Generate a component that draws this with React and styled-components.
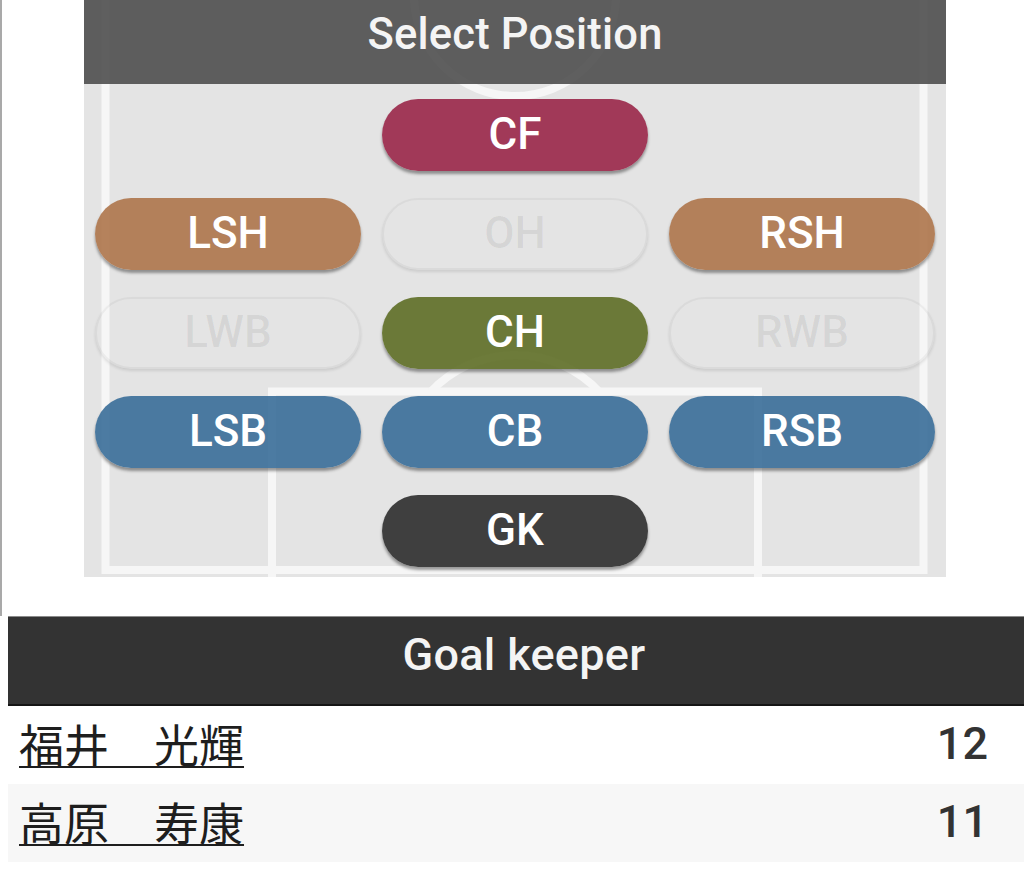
import React from "react";
import styled, { createGlobalStyle } from "styled-components";

const Global = createGlobalStyle`
  html, body { margin: 0; padding: 0; background: #ffffff; }
  body { font-family: Roboto, "Noto Sans", sans-serif; width: 1024px; }
`;

const Page = styled.div`
  width: 1024px;
  display: flex;
  flex-direction: column;
`;

const TopSection = styled.section`
  height: 616px;
  border-left: 2px solid #a9a9a9;
  padding-left: 82px;
  box-sizing: border-box;
`;

const Field = styled.div`
  position: relative;
  width: 862px;
  height: 577px;
  background: #e4e4e4;
  overflow: hidden;
  display: flex;
  flex-direction: column;
`;

const Pitch = styled.svg`
  position: absolute;
  inset: 0;
  width: 100%;
  height: 100%;
`;

const FieldHeader = styled.h2`
  position: relative;
  margin: 0;
  height: 84px;
  box-sizing: border-box;
  padding-bottom: 15px;
  display: flex;
  align-items: center;
  justify-content: center;
  background: rgba(74, 74, 74, 0.88);
  color: #f4f4f4;
  font-family: Roboto, sans-serif;
  font-weight: 500;
  font-size: 43.5px;
  letter-spacing: 0.2px;
`;

const Grid = styled.div`
  position: relative;
  display: grid;
  grid-template-columns: repeat(3, 1fr);
  grid-auto-rows: 72px;
  column-gap: 21px;
  row-gap: 27px;
  padding: 15px 11px 0 11px;
`;

const PosButton = styled.button`
  grid-column: ${(p) => p.$col};
  border-radius: 36px;
  border: ${(p) => (p.$off ? "2px solid rgba(0,0,0,0.045)" : "none")};
  background: ${(p) => p.$bg};
  color: ${(p) => (p.$off ? "rgba(0,0,0,0.065)" : "#ffffff")};
  box-shadow: ${(p) =>
    p.$off
      ? "0 2px 3px rgba(0,0,0,0.10)"
      : "0 3px 3px rgba(0,0,0,0.38)"};
  font-family: Roboto, sans-serif;
  font-weight: 500;
  font-size: 44px;
  line-height: 1;
  padding: 0 0 2px 0;
  display: flex;
  align-items: center;
  justify-content: center;
  cursor: pointer;
`;

const ListHeader = styled.h2`
  margin: 0 0 0 8px;
  height: 90px;
  box-sizing: border-box;
  padding: 0 0 12px 16px;
  border-top: 1px solid #8a8a8a;
  border-bottom: 2px solid #151515;
  background: #333333;
  color: #f4f4f4;
  display: flex;
  align-items: center;
  justify-content: center;
  font-family: Roboto, sans-serif;
  font-weight: 500;
  font-size: 45px;
  letter-spacing: 0.3px;
`;

const PlayerRow = styled.div`
  margin-left: 8px;
  height: 78px;
  display: flex;
  align-items: center;
  justify-content: space-between;
  padding: 0 36px 4px 11px;
  box-sizing: border-box;
  background: ${(p) => (p.$alt ? "#f7f7f7" : "#ffffff")};
`;

const PlayerName = styled.a`
  font-family: "Noto Sans CJK JP", "Noto Sans", sans-serif;
  font-weight: 400;
  font-size: 45px;
  line-height: 1;
  color: #1e1e1e;
  text-decoration: underline;
  text-decoration-thickness: 2px;
  text-underline-offset: 3px;
`;

const Number = styled.span`
  font-family: Roboto, sans-serif;
  font-weight: 500;
  font-size: 45px;
  line-height: 1;
  color: #333333;
`;

const positions = [
  { label: "CF", col: 2, bg: "rgba(156,44,77,0.93)" },
  { label: "LSH", col: 1, bg: "rgba(175,120,80,0.93)" },
  { label: "OH", col: 2, off: true },
  { label: "RSH", col: 3, bg: "rgba(175,120,80,0.93)" },
  { label: "LWB", col: 1, off: true },
  { label: "CH", col: 2, bg: "rgba(98,113,43,0.93)" },
  { label: "RWB", col: 3, off: true },
  { label: "LSB", col: 1, bg: "rgba(62,113,155,0.93)" },
  { label: "CB", col: 2, bg: "rgba(62,113,155,0.93)" },
  { label: "RSB", col: 3, bg: "rgba(62,113,155,0.93)" },
  { label: "GK", col: 2, bg: "rgba(52,52,52,0.94)" },
];

const players = [
  { name: "福井　光輝", no: 12 },
  { name: "高原　寿康", no: 11 },
];

export default function App() {
  return (
    <Page>
      <Global />
      <TopSection>
        <Field>
          <Pitch viewBox="0 0 862 577" preserveAspectRatio="none">
            <g fill="none" stroke="#f6f6f6" strokeWidth="8">
              <rect x="21.5" y="-20" width="818" height="590" />
              <rect x="188" y="391.5" width="486" height="200" />
              <circle cx="431" cy="-5" r="101" />
              <path d="M 347 391.5 A 115 115 0 0 1 515 391.5" />
            </g>
          </Pitch>
          <FieldHeader>Select Position</FieldHeader>
          <Grid>
            {positions.map((p) => (
              <PosButton
                key={p.label}
                $col={p.col}
                $off={p.off}
                $bg={p.off ? "transparent" : p.bg}
              >
                {p.label}
              </PosButton>
            ))}
          </Grid>
        </Field>
      </TopSection>
      <ListHeader>Goal keeper</ListHeader>
      {players.map((pl, i) => (
        <PlayerRow key={pl.no} $alt={i % 2 === 1}>
          <PlayerName href="#">{pl.name}</PlayerName>
          <Number>{pl.no}</Number>
        </PlayerRow>
      ))}
    </Page>
  );
}
